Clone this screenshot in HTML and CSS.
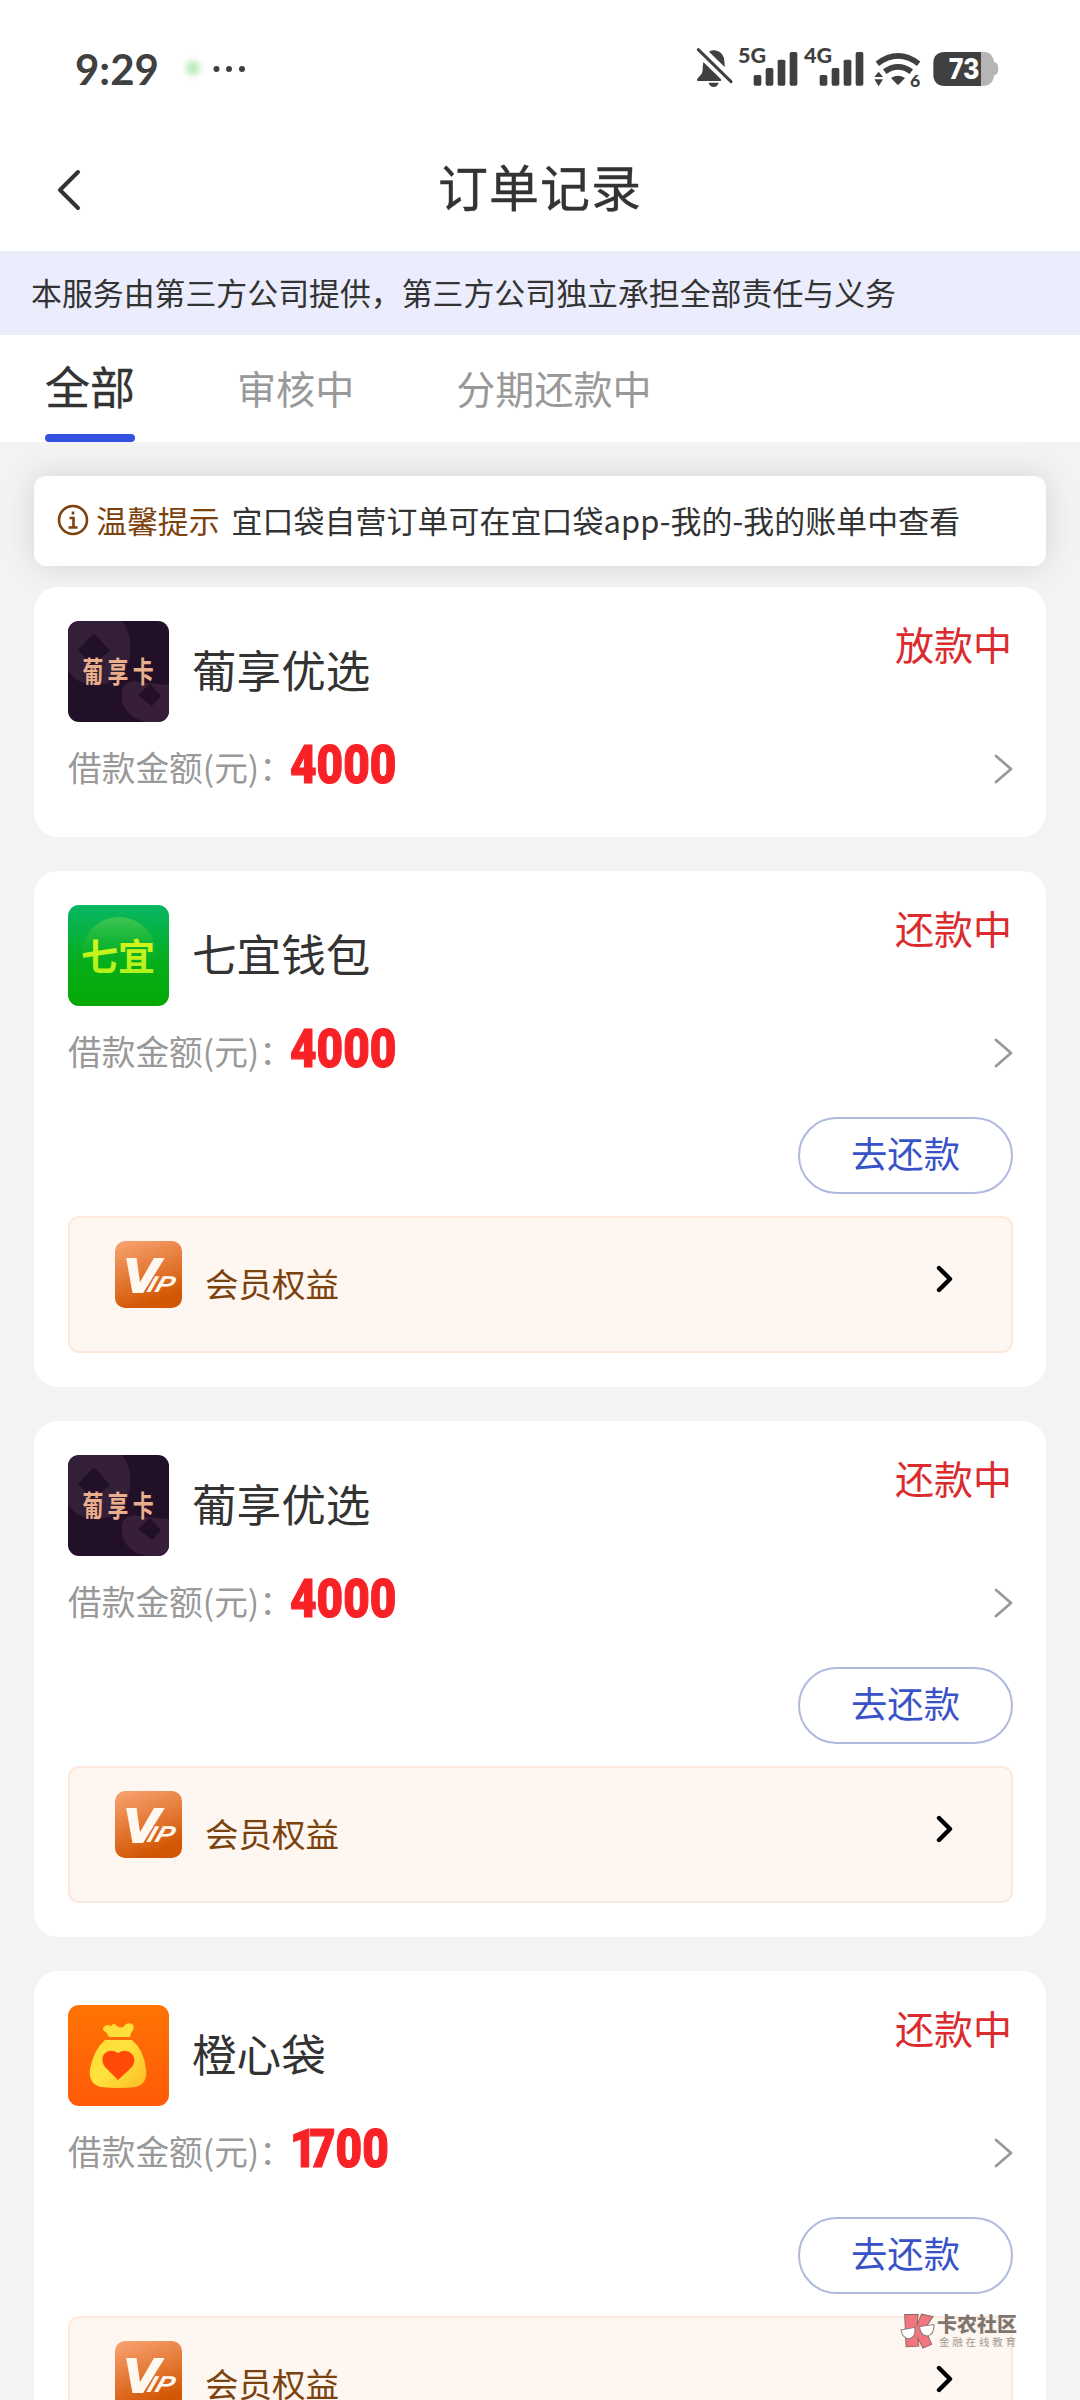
FILE: index.html
```html
<!DOCTYPE html>
<html lang="zh-CN">
<head>
<meta charset="utf-8">
<title>订单记录</title>
<link rel="stylesheet" href="styles.css">
</head>
<body>
<svg class="defs" aria-hidden="true">
  <defs>
    <linearGradient id="g-green" x1="0" y1="0" x2="0" y2="1"><stop offset="0" stop-color="#08b765"/><stop offset=".6" stop-color="#05ad18"/><stop offset="1" stop-color="#05a805"/></linearGradient>
    <linearGradient id="g-globe" x1="0" y1="0" x2="0" y2="1"><stop offset="0" stop-color="#3fc552"/><stop offset=".7" stop-color="#07ae12" stop-opacity="0"/></linearGradient>
    <linearGradient id="g-lime" x1="0" y1="0" x2="0" y2="1"><stop offset="0" stop-color="#e2f71b"/><stop offset="1" stop-color="#a6ef1c"/></linearGradient>
    <linearGradient id="g-orange" x1="0" y1="0" x2="0" y2="1"><stop offset="0" stop-color="#ff7403"/><stop offset="1" stop-color="#ff5a08"/></linearGradient>
    <linearGradient id="g-bag" x1="0" y1="0" x2="1" y2="1"><stop offset="0" stop-color="#fdd932"/><stop offset=".5" stop-color="#ffe23e"/><stop offset="1" stop-color="#fbbd22"/></linearGradient>
    <linearGradient id="g-vip" x1="0" y1="0" x2=".35" y2="1"><stop offset="0" stop-color="#f9a473"/><stop offset="1" stop-color="#d25603"/></linearGradient>
    <symbol id="logo-pu" viewBox="0 0 101 101">
      <rect width="101" height="101" fill="#220f28"/>
      <path fill="#332038" fill-rule="evenodd" d="M0 4Q8 0 14 0H54Q64 12 62 34Q58 60 32 64Q12 66 0 50ZM26 12L10 29L24 44L42 30Z"/>
      <path fill="#371f38" fill-rule="evenodd" d="M54 68Q60 58 70 61L101 64V101H78Q58 96 54 80ZM82 63L70 74L84 85L93 75Z"/>
      <text class="logo-pu-text" transform="scale(.72 1)" x="20" y="62">葡享卡</text>
    </symbol>
    <symbol id="logo-qiyi" viewBox="0 0 101 101">
      <rect width="101" height="101" fill="url(#g-green)"/>
      <circle cx="51" cy="49" r="37" fill="url(#g-globe)"/>
      <text class="logo-qiyi-text" x="13" y="66">七宜</text>
    </symbol>
    <symbol id="logo-bag" viewBox="0 0 101 101">
      <rect width="101" height="101" fill="url(#g-orange)"/>
      <path fill="url(#g-bag)" d="M35 23Q38 18 43 21Q46 17 49 21Q54 25 58 19Q63 17 65 20Q67 24 63 28L62 32H41L38 27Q35 26 35 23ZM37 35H64Q76 45 78 64Q80 79 68 82Q50 84 33 82Q20 79 22 64Q26 44 37 35Z"/>
      <path fill="#ff4a08" d="M50 75L37 62Q32 55 36 49Q42 43 50 48Q58 43 64 49Q69 55 64 62Z"/>
    </symbol>
    <symbol id="logo-vip" viewBox="0 0 67 67">
      <rect width="67" height="67" rx="10" fill="url(#g-vip)"/>
      <text class="vip-big" x="8" y="51" textLength="36" lengthAdjust="spacingAndGlyphs">V</text>
      <text class="vip-small" transform="translate(31 51) skewX(-18)" x="0" y="0" textLength="26" lengthAdjust="spacingAndGlyphs">IP</text>
    </symbol>
    <symbol id="arrow" viewBox="0 0 20 32"><path d="M3 3L18 16L3 29" fill="none" stroke="currentColor" stroke-width="2.8" stroke-linecap="round" stroke-linejoin="round"/></symbol>
    <symbol id="arrow-bold" viewBox="0 0 18 30"><path d="M4 4L15 15L4 26" fill="none" stroke="currentColor" stroke-width="4.400" stroke-linecap="round" stroke-linejoin="round"/></symbol>
    <symbol id="bars" viewBox="0 0 198 135">
      <rect x="53" y="90" width="23" height="32" rx="5"/><rect x="89" y="69" width="23" height="53" rx="5"/><rect x="125" y="44" width="23" height="78" rx="5"/><rect x="161" y="21" width="23" height="101" rx="5"/>
    </symbol>
  </defs>
</svg>

<header class="status-bar">
  <div class="clock">9:29</div>
  <svg class="activity" viewBox="0 0 70 24"><circle class="glow" cx="12" cy="11" r="7"/><circle cx="35.500" cy="12" r="3"/><circle cx="48" cy="12" r="3"/><circle cx="61" cy="12" r="3"/></svg>
  <div class="indicators">
    <svg width="41" height="45" viewBox="105 75 123 135"><path d="M147 95Q155 90 165 91Q195 96 194 131V141ZM130 126L183 178V183H113Q109 180 112 176L125 161Q129 155 128 142ZM146 188H176Q172 201 161 201Q150 201 146 188Z"/><path d="M115 89L213 185" fill="none" stroke="#404040" stroke-width="9" stroke-linecap="round"/></svg>
    <svg width="66" height="45" viewBox="0 0 198 135"><use href="#bars"/><text class="net" x="6" y="54" textLength="84" lengthAdjust="spacingAndGlyphs">5G</text></svg>
    <svg width="66" height="45" viewBox="0 0 198 135"><use href="#bars"/><text class="net" x="6" y="54" textLength="84" lengthAdjust="spacingAndGlyphs">4G</text></svg>
    <svg width="60" height="45" viewBox="624 75 180 135"><g fill="none" stroke="#404040" stroke-width="17"><path d="M652 131Q714 84 776 131"/><path d="M674 155Q714 126 754 155"/></g><path d="M693 174Q714 160 735 174L717 193Q714 196 711 193ZM656 155L669 171H643ZM656 199L643 178H669Z"/><text class="wifi-gen" x="750" y="201">6</text></svg>
    <svg width="74" height="45" viewBox="804 75 222 135"><path fill="#b5b5b5" d="M960 96H975Q997 97 1003 127Q1015 128 1015 146Q1015 164 1003 165Q998 197 972 198H960Z"/><path d="M855 96H963V198H855Q820 198 820 163V131Q820 96 855 96Z"/><text class="charge" x="866" y="178" textLength="92" lengthAdjust="spacingAndGlyphs">73</text></svg>
  </div>
</header>

<nav class="title-bar">
  <svg class="back" viewBox="0 0 26 44"><path d="M22 4L4 22L22 40"/></svg>
  <h1>订单记录</h1>
</nav>

<p class="notice">本服务由第三方公司提供，第三方公司独立承担全部责任与义务</p>

<div class="tabs">
  <span class="tab active">全部</span>
  <span class="tab">审核中</span>
  <span class="tab">分期还款中</span>
</div>

<main>
  <div class="tip">
    <svg class="info" viewBox="0 0 32 32"><circle cx="16" cy="16" r="14"/><path d="M16 7.500V10.500M12.500 14H16.500V23M11.500 23.500H20.500"/></svg>
    <span class="tip-label">温馨提示</span>
    <span class="tip-text">宜口袋自营订单可在宜口袋app-我的-我的账单中查看</span>
  </div>

  <section class="card">
    <div class="head"><svg class="logo"><use href="#logo-pu"/></svg><h2>葡享优选</h2><span class="state">放款中</span></div>
    <div class="loan"><span class="label">借款金额(元)：</span><b class="amount">4000</b><svg class="more"><use href="#arrow"/></svg></div>
  </section>

  <section class="card">
    <div class="head"><svg class="logo"><use href="#logo-qiyi"/></svg><h2>七宜钱包</h2><span class="state">还款中</span></div>
    <div class="loan"><span class="label">借款金额(元)：</span><b class="amount">4000</b><svg class="more"><use href="#arrow"/></svg></div>
    <button class="repay">去还款</button>
    <div class="vip"><svg class="vip-logo"><use href="#logo-vip"/></svg><span>会员权益</span><svg class="vip-more"><use href="#arrow-bold"/></svg></div>
  </section>

  <section class="card">
    <div class="head"><svg class="logo"><use href="#logo-pu"/></svg><h2>葡享优选</h2><span class="state">还款中</span></div>
    <div class="loan"><span class="label">借款金额(元)：</span><b class="amount">4000</b><svg class="more"><use href="#arrow"/></svg></div>
    <button class="repay">去还款</button>
    <div class="vip"><svg class="vip-logo"><use href="#logo-vip"/></svg><span>会员权益</span><svg class="vip-more"><use href="#arrow-bold"/></svg></div>
  </section>

  <section class="card">
    <div class="head"><svg class="logo"><use href="#logo-bag"/></svg><h2>橙心袋</h2><span class="state">还款中</span></div>
    <div class="loan"><span class="label">借款金额(元)：</span><b class="amount"><span class="one">1</span>700</b><svg class="more"><use href="#arrow"/></svg></div>
    <button class="repay">去还款</button>
    <div class="vip"><svg class="vip-logo"><use href="#logo-vip"/></svg><span>会员权益</span><svg class="vip-more"><use href="#arrow-bold"/></svg></div>
  </section>
</main>

<div class="watermark">
  <svg class="k-logo" viewBox="0 0 104 106"><g fill="#f3767e" stroke="#8a6a66" stroke-width="3"><path d="M14 4H54L50 38L64 3L98 10L74 46L94 92L68 104L52 72L56 98L18 100Z"/></g><g fill="#fff" stroke="#8a7a70" stroke-width="3"><path d="M3 50L44 42Q48 72 28 76Q8 76 3 50Z"/><path d="M58 40L101 34Q102 66 80 68Q60 66 58 40Z"/></g></svg>
  <div class="mark-text"><strong>卡农社区</strong><small>金融在线教育</small></div>
</div>
</body>
</html>
```
FILE: styles.css
```css
* { box-sizing: border-box; }
html, body { height: 2400px; overflow: hidden; }
body {
  position: relative;
  margin: 0;
  width: 1080px;
  background: #f3f3f3;
  color: #333;
  font-family: "Noto Sans CJK SC", sans-serif;
  display: flex;
  flex-direction: column;
}
h1, h2, p { margin: 0; font-weight: 400; }
svg { display: block; flex: none; }
.defs { position: absolute; width: 0; height: 0; }

/* status bar */
.status-bar {
  flex: none;
  height: 130px;
  padding: 45px 78px 0 75px;
  background: #fff;
  display: flex;
  align-items: flex-start;
  fill: #404040;
}
.clock {
  width: 106px;
  height: 45px;
  color: #404040;
  font: 700 42px/48px "Lato", sans-serif;
  white-space: nowrap;
}
.activity { width: 70px; height: 24px; margin-top: 12px; overflow: visible; }
.glow { fill: #b6ebb5; filter: blur(3px); }
.indicators { display: flex; margin-left: auto; }
.indicators svg { overflow: visible; }
.net { font: 900 64px "Lato", sans-serif; }
.wifi-gen { font: 900 53px "Lato", sans-serif; }
.charge { font: 800 84px "Inter", sans-serif; fill: #fff; }

/* title bar */
.title-bar {
  flex: none;
  height: 121px;
  padding-bottom: 2px;
  background: #fff;
  display: grid;
  grid-template-columns: 120px 1fr 120px;
  align-items: center;
}
.back { width: 26px; height: 44px; margin-left: 56px; fill: none; stroke: #333; stroke-width: 4; stroke-linecap: round; stroke-linejoin: round; }
h1 { padding-bottom: 9px; font-size: 50px; line-height: 60px; letter-spacing: 1px; text-align: center; -webkit-text-stroke: .4px #333; }

.notice {
  flex: none;
  height: 84px;
  padding-left: 31px;
  background: #ebecfc;
  font-size: 30.9px;
  line-height: 82px;
  white-space: nowrap;
}

/* tabs */
.tabs { flex: none; height: 107px; padding-left: 45px; background: #fff; display: flex; }
.tab { height: 107px; margin-right: 102px; font-size: 39.1px; line-height: 105px; color: #999; white-space: nowrap; }
.tab.active { width: 90px; font-size: 45px; line-height: 102px; color: #333; -webkit-text-stroke: .3px #333; display: flex; flex-direction: column; }
.tab.active::after { content: ""; height: 8px; margin-top: -3px; border-radius: 4px; background: #3451df; }

main { padding: 34px 34px 0; display: flex; flex-direction: column; gap: 34px; }

.tip {
  height: 90px;
  margin-bottom: -13px;
  padding: 0 0 3px 23px;
  border-radius: 12px;
  background: #fff;
  box-shadow: 0 0 32px rgba(0, 0, 0, .13);
  display: flex;
  align-items: center;
  font-size: 30.9px;
  line-height: 40px;
  white-space: nowrap;
}
.info { width: 32px; height: 32px; margin-right: 7px; fill: none; stroke: #7d410d; stroke-width: 2.6; }
.tip-label { color: #7d410d; margin-right: 12px; }
.tip-text { letter-spacing: .1px; }

/* order cards */
.card {
  position: relative;
  flex: none;
  padding: 34px 33px 34px 34px;
  border-radius: 24px;
  background: #fff;
  display: flex;
  flex-direction: column;
}
.head { display: flex; height: 101px; }
.logo { width: 101px; height: 101px; border-radius: 11px; overflow: hidden; }
h2 { margin-left: 23px; font-size: 44.6px; line-height: 96px; }
.state { margin-left: auto; margin-right: 1px; font-size: 39px; line-height: 45px; color: #dc2b2f; }
.loan { display: flex; height: 60px; margin: 17px 0 4px; align-items: center; }
.label { width: 222px; padding-bottom: 4px; font-size: 33.7px; line-height: 56px; color: #999; white-space: nowrap; }
.amount {
  padding-bottom: 8px;
  font: 900 54px/50px "Roboto", sans-serif;
  color: #f82226;
  -webkit-text-stroke: 1.2px #f82226;
  transform: scaleX(.85);
  transform-origin: left;
}
.one { letter-spacing: -9px; }
.more { width: 20px; height: 32px; margin-left: auto; color: #999; }
.repay {
  align-self: flex-end;
  width: 215px;
  height: 77px;
  margin: 30px 0 0;
  padding: 0 0 8px;
  border: 2px solid #b0b9df;
  border-radius: 39px;
  background: #fff;
  color: #3852c8;
  font: 36.4px/60px "Noto Sans CJK SC", sans-serif;
}
.vip {
  height: 137px;
  margin-top: 22px;
  padding: 23px 58px 0 45px;
  border: 2px solid #fce9dc;
  border-radius: 11px;
  background: #fef6f0;
  display: flex;
  align-items: flex-start;
  color: #7b420d;
  font-size: 33.5px;
  line-height: 83px;
}
.vip-logo { width: 67px; height: 67px; margin-right: 23px; }
.vip-more { width: 18px; height: 30px; margin: 23px 0 0 auto; color: #000; }

/* artwork lettering */
.logo-pu-text { font: 700 29px "Noto Sans CJK SC", sans-serif; letter-spacing: 6px; fill: #e9ae8b; }
.logo-qiyi-text { font: 700 37px "Noto Sans CJK SC", sans-serif; fill: url(#g-lime); }
.vip-big { font: italic 700 49px "Liberation Sans", sans-serif; fill: #fff8f0; stroke: #fff8f0; stroke-width: 2px; }
.vip-small { font: italic 700 23px "Liberation Sans", sans-serif; fill: #fff8f0; }

/* overlaid watermark */
.watermark { position: absolute; left: 900px; top: 2313px; width: 124px; height: 36px; display: flex; }
.k-logo { width: 35px; height: 36px; }
.mark-text { display: flex; flex-direction: column; margin-left: 2px; white-space: nowrap; }
.mark-text strong { font-weight: 900; font-size: 20px; line-height: 21px; color: #81766f; }
.mark-text small { margin: 1px 0 0 2px; font-size: 10.5px; line-height: 13px; letter-spacing: 2.8px; color: #a49a94; }
```
